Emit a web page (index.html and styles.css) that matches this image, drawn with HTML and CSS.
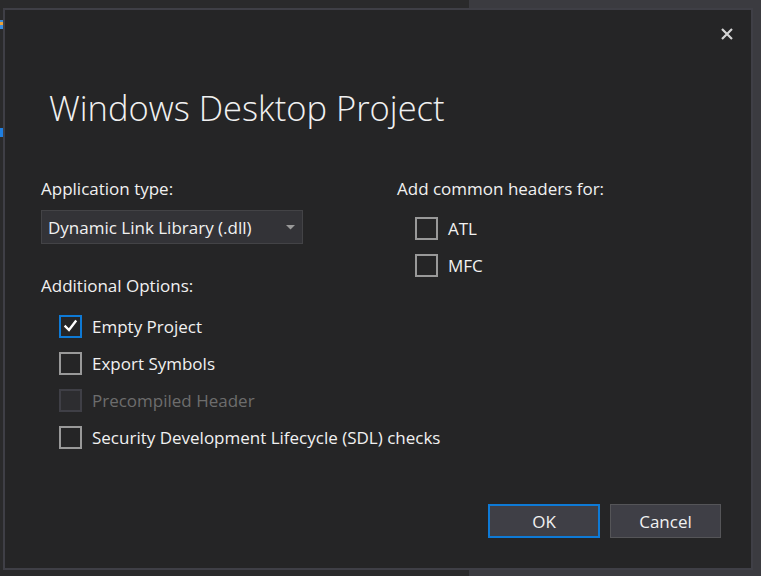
FILE: index.html
```html
<!DOCTYPE html>
<html lang="en">
<head>
<meta charset="utf-8">
<title>Windows Desktop Project</title>
<link rel="stylesheet" href="styles.css">
</head>
<body>
<div class="backdrop-right"></div>
<div class="edge-icon edge-icon-a"></div>
<div class="edge-icon edge-icon-b"></div>

<div class="dialog">
  <div class="header">
    <button class="close" aria-label="Close">
      <svg width="14" height="12" viewBox="0 0 14 12"><path d="M2 1 L12 11 M12 1 L2 11" stroke="#d4d4d4" stroke-width="2.2" fill="none"/></svg>
    </button>
  </div>
  <h1 class="title">Windows Desktop Project</h1>

  <div class="body">
    <div class="col col-left">
      <div class="label">Application type:</div>
      <div class="select">
        <span>Dynamic Link Library (.dll)</span>
        <svg class="caret" width="9" height="5" viewBox="0 0 9 5"><path d="M0 0 H9 L4.5 4.5 Z" fill="#999999"/></svg>
      </div>
      <div class="label label-options">Additional Options:</div>
      <div class="checks">
        <div class="check-row">
          <span class="box box-checked">
            <svg width="17" height="15" viewBox="0 0 17 15"><path d="M3.5 7.5 L7 11 L13.5 2.5" stroke="#ffffff" stroke-width="2.4" fill="none" stroke-linecap="square"/></svg>
          </span>
          <span class="check-label">Empty Project</span>
        </div>
        <div class="check-row">
          <span class="box"></span>
          <span class="check-label">Export Symbols</span>
        </div>
        <div class="check-row disabled">
          <span class="box"></span>
          <span class="check-label">Precompiled Header</span>
        </div>
        <div class="check-row">
          <span class="box"></span>
          <span class="check-label">Security Development Lifecycle (SDL) checks</span>
        </div>
      </div>
    </div>
    <div class="col col-right">
      <div class="label">Add common headers for:</div>
      <div class="checks checks-right">
        <div class="check-row">
          <span class="box"></span>
          <span class="check-label">ATL</span>
        </div>
        <div class="check-row">
          <span class="box"></span>
          <span class="check-label">MFC</span>
        </div>
      </div>
    </div>
  </div>

  <div class="footer">
    <button class="btn btn-primary">OK</button>
    <button class="btn btn-cancel">Cancel</button>
  </div>
</div>
</body>
</html>
```

FILE: styles.css
```css
html, body {
  margin: 0;
  padding: 0;
}

body {
  width: 761px;
  height: 576px;
  overflow: hidden;
  position: relative;
  background: #2a2a2b;
  font-family: "Open Sans", "Noto Sans", sans-serif;
  color: #f1f1f1;
}

.backdrop-right {
  position: absolute;
  left: 469px;
  top: 0;
  right: 0;
  bottom: 0;
  background: #3b3b40;
}

.edge-icon {
  position: absolute;
  left: 0;
  width: 3px;
}

.edge-icon-a {
  top: 20px;
  height: 9px;
  background: linear-gradient(#3c8ddc 0 2px, #e8a23a 2px 5px, #3c8ddc 5px);
}

.edge-icon-b {
  top: 128px;
  height: 9px;
  background: #1f7fe0;
}

.dialog {
  position: relative;
  margin: 8px 0 0 3px;
  width: 750px;
  height: 562px;
  box-sizing: border-box;
  border: 2px solid #3f3f46;
  background: #252526;
  display: flex;
  flex-direction: column;
}

.header {
  display: flex;
  justify-content: flex-end;
  padding: 18px 17px 0 0;
}

.close {
  width: 14px;
  height: 12px;
  padding: 0;
  border: 0;
  background: transparent;
  display: block;
}

.close svg {
  display: block;
}

.title {
  margin: 46px 0 0 44px;
  font-weight: 300;
  font-size: 34.5px;
  line-height: 44px;
  color: #f1f1f1;
  white-space: nowrap;
}

.body {
  display: flex;
  padding: 0 0 0 36px;
  margin-top: 49px;
}

.col-left {
  width: 356px;
}

.label {
  font-size: 17px;
  line-height: 20px;
  height: 20px;
  white-space: nowrap;
}

.select {
  margin-top: 11px;
  width: 262px;
  height: 34px;
  box-sizing: border-box;
  border: 1px solid #434346;
  background: #333337;
  display: flex;
  align-items: center;
  justify-content: space-between;
  padding: 0 7px 0 6px;
  font-size: 17px;
  white-space: nowrap;
}

.caret {
  display: block;
  margin-top: 1px;
}

.label-options {
  margin-top: 32px;
}

.checks {
  margin: 12px 0 0 18px;
}

.checks-right {
  margin: 11px 0 0 18px;
}

.check-row {
  display: flex;
  align-items: center;
  height: 37px;
  font-size: 17px;
  white-space: nowrap;
}

.box {
  width: 23px;
  height: 23px;
  box-sizing: border-box;
  border: 2px solid #999999;
  margin-right: 10px;
  display: flex;
  align-items: center;
  justify-content: center;
  flex: none;
}

.box svg {
  display: block;
}

.box-checked {
  border-color: #0e7ad6;
}

.disabled .box {
  border-color: #3f3f46;
  background: #2d2d30;
}

.disabled .check-label {
  color: #6d6d6d;
}

.footer {
  margin-top: auto;
  display: flex;
  justify-content: flex-end;
  gap: 10px;
  padding: 0 30px 30px 0;
}

.btn {
  width: 112px;
  height: 34px;
  box-sizing: border-box;
  border: 1px solid #555558;
  background: #3f3f46;
  color: #f1f1f1;
  font-family: inherit;
  font-size: 17px;
  padding: 0;
}

.btn-cancel {
  width: 111px;
}

.btn-primary {
  border: 2px solid #0e7ad6;
}
```
